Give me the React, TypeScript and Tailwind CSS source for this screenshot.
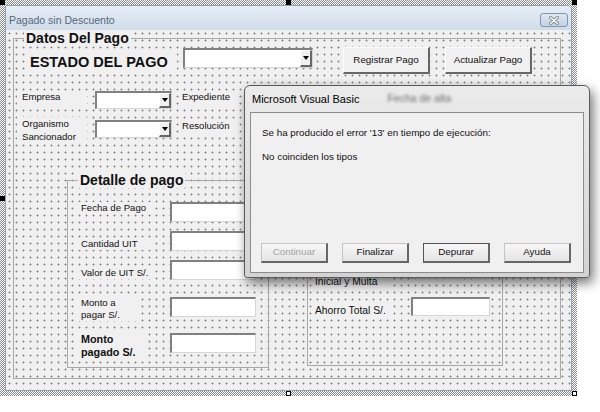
import React from 'react';

// dotted design grid of the VBA form editor
const dots =
  'bg-[#f0f0f0] bg-[radial-gradient(circle,#858585_0.8px,transparent_1.2px)] bg-size-[7px_7px]';

const sunken =
  'border-t-2 border-l-2 border-r border-b border-t-[#808080] border-l-[#808080] border-r-[#d6d6d6] border-b-[#d6d6d6]';

const raised =
  'bg-[#f0f0f0] border-t border-l border-r-2 border-b-2 border-t-white border-l-white border-r-[#676767] border-b-[#676767]';

const Combo = ({ className }: { className: string }) => (
  <div className={`flex bg-white ${sunken} ${className}`}>
    <div className="flex-1" />
    <div className={`w-[12px] flex items-center justify-center ${raised}`}>
      <svg width="6" height="4" viewBox="0 0 6 4">
        <path d="M0 0h6L3 4z" fill="#000" />
      </svg>
    </div>
  </div>
);

const TextBox = ({ className }: { className: string }) => (
  <div className={`bg-white ${sunken} ${className}`} />
);

const FormButton = ({ label }: { label: string }) => (
  <div className={`w-[87px] h-[27px] flex items-center justify-center text-[9.8px] ${raised}`}>
    {label}
  </div>
);

const Frame = ({
  title,
  className,
  children,
}: {
  title: string;
  className: string;
  children: React.ReactNode;
}) => (
  <fieldset className={`border border-[#a8a8a8] ${className}`}>
    <legend className="ml-[10px] px-[2px] bg-[#f0f0f0] font-bold text-[14px] leading-[16px] text-[#111]">
      {title}
    </legend>
    {children}
  </fieldset>
);

const DialogButton = ({ label, disabled, primary }: { label: string; disabled?: boolean; primary?: boolean }) => (
  <div
    className={`w-[67px] h-[20px] flex items-center justify-center text-[9.8px] bg-linear-to-b from-[#f7f7f7] to-[#e4e4e4] border-t border-l border-r-2 border-b-2 border-r-[#666] border-b-[#666] ${
      primary ? 'border-t-[#555] border-l-[#555]' : 'border-t-[#c4c4c4] border-l-[#c4c4c4]'
    } ${disabled ? 'text-[#a3a3a3]' : 'text-[#111]'}`}
  >
    {label}
  </div>
);

const Handle = ({ className }: { className: string }) => (
  <div className={`absolute w-[5px] h-[5px] ${className}`} />
);

export default function App() {
  return (
    <div className="relative w-[600px] h-[412px] bg-white overflow-hidden font-['Liberation_Sans',Arial,sans-serif] text-[9.6px] text-[#111]">
      {/* selection border around the UserForm */}
      <div className="w-[577px] h-[396px] p-[5px] bg-[repeating-conic-gradient(#8c8c8c_0%_25%,#ffffff_0%_50%)] bg-size-[2px_2px]">
        <div className="w-full h-full flex flex-col border border-[#8fa1b6] rounded-tr-[5px] rounded-tl-[2px] overflow-hidden">
          {/* title bar */}
          <div className="h-[24px] flex items-end pb-[3px] pl-[3px] pr-[3px] bg-linear-to-b from-[#e6edf5] to-[#d0dcea]">
            <span className="text-[10.5px] leading-[14px] text-[#55677b]">Pagado sin Descuento</span>
            <div className="ml-auto w-[28px] h-[14px] flex items-center justify-center rounded-[3px] border border-[#8195ab] bg-linear-to-b from-[#dfe8f2] to-[#c3d1e1]">
              <svg width="10" height="9" viewBox="0 0 10 9">
                <path d="M1.5 1.5l7 6M8.5 1.5l-7 6" stroke="#7d8797" strokeWidth="3" strokeLinecap="round" />
                <path d="M1.5 1.5l7 6M8.5 1.5l-7 6" stroke="#ffffff" strokeWidth="1.4" strokeLinecap="round" />
              </svg>
            </div>
          </div>

          {/* client area */}
          <div className={`flex-1 ${dots}`}>
            <Frame title="Datos Del Pago" className="ml-[7px] w-[548px] h-[349px]">
              <div className="flex items-start mt-[1px] h-[27px]">
                <div className="ml-[13px] mt-[4px] w-[150px] h-[22px] px-[3px] flex items-center bg-[#f0f0f0] font-bold text-[14.5px] leading-[18px] whitespace-nowrap">
                  ESTADO DEL PAGO
                </div>
                <Combo className="ml-[6px] mt-[1px] w-[130px] h-[20px]" />
                <div className="ml-[30px]">
                  <FormButton label="Registrar Pago" />
                </div>
                <div className="ml-[15px]">
                  <FormButton label="Actualizar Pago" />
                </div>
              </div>

              <div className="flex items-start mt-[17px] h-[18px]">
                <div className="ml-[3px] w-[70px] h-[16px] pl-[5px] leading-[12px] bg-[#f0f0f0]">Empresa</div>
                <Combo className="ml-[8px] w-[77px] h-[18px]" />
                <div className="ml-[10px] w-[56px] h-[16px] leading-[12px] bg-[#f0f0f0]">Expediente</div>
              </div>

              <div className="flex items-start mt-[11px] h-[18px]">
                <div className="ml-[3px] -mt-[3px] w-[70px] pl-[5px] leading-[13px] bg-[#f0f0f0]">
                  Organismo
                  <br />
                  Sancionador
                </div>
                <Combo className="ml-[8px] w-[77px] h-[18px]" />
                <div className="ml-[10px] w-[56px] h-[16px] leading-[12px] bg-[#f0f0f0]">Resolución</div>
              </div>

              <div className="flex items-start mt-[34px]">
                <Frame title="Detalle de pago" className="ml-[53px] w-[202px] h-[196px]">
                  <div className="flex items-start mt-[14px] h-[20px]">
                    <div className="ml-[10px] w-[76px] px-[3px] leading-[12px] whitespace-nowrap bg-[#f0f0f0]">Fecha de Pago</div>
                    <TextBox className="ml-[16px] w-[86px] h-[20px]" />
                  </div>
                  <div className="flex items-start mt-[9px] h-[20px]">
                    <div className="ml-[10px] mt-[7px] w-[76px] px-[3px] leading-[12px] whitespace-nowrap bg-[#f0f0f0]">Cantidad UIT</div>
                    <TextBox className="ml-[16px] w-[86px] h-[20px]" />
                  </div>
                  <div className="flex items-start mt-[9px] h-[20px]">
                    <div className="ml-[10px] mt-[7px] w-[76px] px-[3px] leading-[12px] whitespace-nowrap bg-[#f0f0f0]">Valor de UIT S/.</div>
                    <TextBox className="ml-[16px] w-[86px] h-[20px]" />
                  </div>
                  <div className="flex items-start mt-[17px] h-[20px]">
                    <div className="ml-[10px] w-[62px] px-[3px] leading-[12px] bg-[#f0f0f0]">
                      Monto a
                      <br />
                      pagar S/.
                    </div>
                    <TextBox className="ml-[30px] w-[86px] h-[20px]" />
                  </div>
                  <div className="flex items-start mt-[16px] h-[20px]">
                    <div className="ml-[10px] w-[66px] px-[3px] font-bold text-[10.8px] leading-[13px] whitespace-nowrap bg-[#f0f0f0]">
                      Monto
                      <br />
                      pagado S/.
                    </div>
                    <TextBox className="ml-[26px] w-[86px] h-[20px]" />
                  </div>
                </Frame>

                <Frame title="Ahorro" className="ml-[38px] w-[196px] h-[194px]">
                  <div className="flex items-start mt-[14px] h-[20px]">
                    <div className="ml-[5px] w-[78px] px-[2px] leading-[12px] whitespace-nowrap bg-[#f0f0f0]">Monto Inicial S/.</div>
                    <TextBox className="ml-[20px] w-[79px] h-[19px]" />
                  </div>
                  <div className="flex items-start mt-[9px] h-[20px]">
                    <div className="ml-[5px] w-[78px] px-[2px] leading-[12px] bg-[#f0f0f0]">Multa S/.</div>
                    <TextBox className="ml-[20px] w-[79px] h-[19px]" />
                  </div>
                  <div className="flex items-start mt-[9px] h-[20px]">
                    <div className="ml-[5px] mt-[2px] w-[78px] px-[2px] text-[10.3px] leading-[13px] whitespace-nowrap bg-[#f0f0f0]">
                      Ahorro Pago
                      <br />
                      Inicial y Multa
                    </div>
                    <TextBox className="ml-[20px] w-[79px] h-[19px]" />
                  </div>
                  <div className="flex items-start mt-[17px] h-[20px]">
                    <div className="ml-[5px] mt-[8px] w-[78px] px-[2px] text-[10.3px] leading-[12px] whitespace-nowrap bg-[#f0f0f0]">
                      Ahorro Total S/.
                    </div>
                    <TextBox className="ml-[20px] w-[79px] h-[19px]" />
                  </div>
                </Frame>
              </div>
            </Frame>
          </div>
        </div>
      </div>

      {/* sizing handles */}
      <Handle className="left-0 top-0 bg-black" />
      <Handle className="left-[286px] top-0 bg-black" />
      <Handle className="left-[572px] top-0 bg-black" />
      <Handle className="left-0 top-[196px] bg-black" />
      <Handle className="left-[572px] top-[196px] bg-white border border-black" />
      <Handle className="left-[286px] top-[391px] bg-white border border-black" />
      <Handle className="left-[572px] top-[391px] bg-white border border-black" />

      {/* runtime error message box */}
      <div className="absolute left-[244px] top-[85px] w-[346px] h-[193px] flex flex-col rounded-t-[6px] rounded-b-[3px] border border-[#5a5a5a] bg-linear-to-b from-[#ebebeb] to-[#d3d3d3] shadow-[3px_5px_12px_rgba(0,0,0,0.55)]">
        <div className="h-[26px] flex items-center pl-[7px]">
          <span className="text-[11px] text-black">Microsoft Visual Basic</span>
          <span className="ml-[28px] text-[10.5px] text-[#6a6a6a] blur-[1.4px]">Fecha de alta</span>
        </div>
        <div className="mx-[5px] mb-[4px] flex-1 flex flex-col bg-[#f0f0f0] border border-[#8c8c8c] text-[9.8px]">
          <p className="mt-[14px] ml-[11px] leading-[12px]">Se ha producido el error '13' en tiempo de ejecución:</p>
          <p className="mt-[12px] ml-[11px] leading-[12px]">No coinciden los tipos</p>
          <div className="mt-auto mb-[9px] ml-[10px] flex gap-[14px]">
            <DialogButton label="Continuar" disabled />
            <DialogButton label="Finalizar" />
            <DialogButton label="Depurar" primary />
            <DialogButton label="Ayuda" />
          </div>
        </div>
      </div>
    </div>
  );
}
